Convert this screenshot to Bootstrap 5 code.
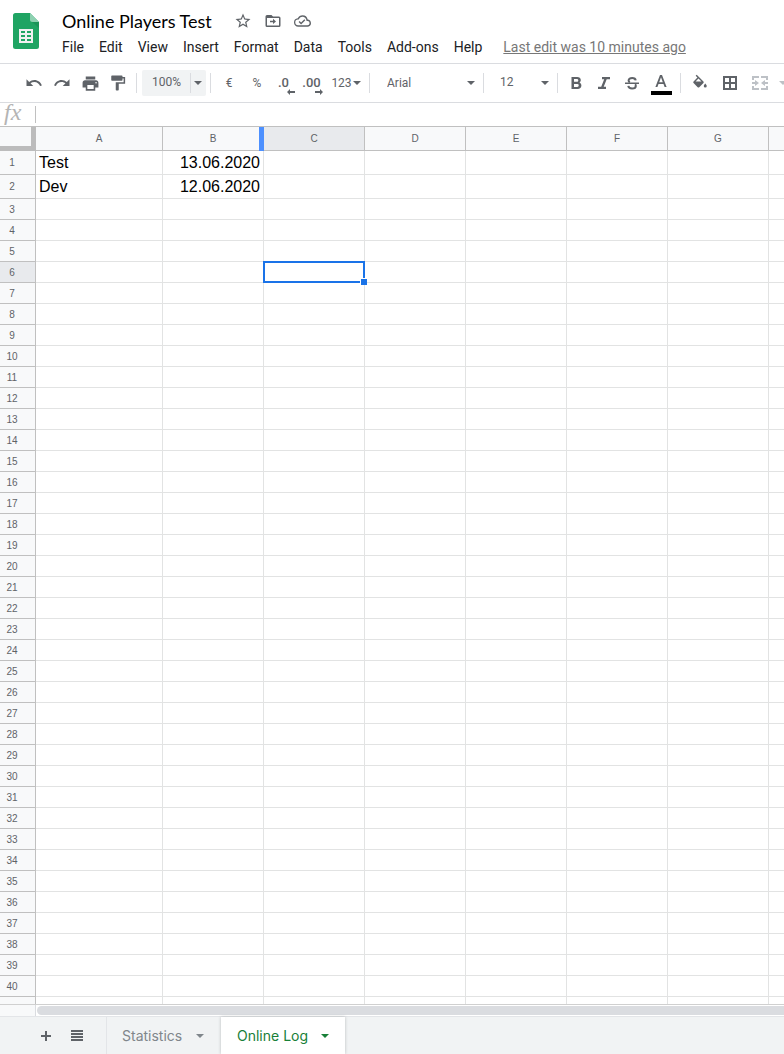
<!DOCTYPE html>
<html lang="en">
<head>
<meta charset="utf-8">
<meta name="viewport" content="width=device-width, initial-scale=1">
<title>Online Players Test</title>
<link href="https://cdn.jsdelivr.net/npm/bootstrap@5.3.0/dist/css/bootstrap.min.css" rel="stylesheet">
<style>
  body { font-family: Roboto, "Liberation Sans", sans-serif; color: #202124; font-size: 14px; line-height: 20px; }
  button { border: 0; background: none; padding: 0; color: inherit; }
  svg { display: block; fill: currentColor; flex: none; }
  .ink { color: #5f6368; }

  .doc-head { border-bottom: 1px solid #dadce0; height: 64px; }
  .doc-logo { margin: 13px 16px 0 13px; }
  .doc-title { font-family: Lato, sans-serif; font-size: 18px; line-height: 24px; padding-left: 7px; color: #000; }
  .doc-text { padding-top: 9px; }
  .doc-actions { gap: 12px; margin-left: 22px; }
  .doc-menu { gap: 1px; padding-top: 4px; }
  .doc-menu button { padding: 0 7px; white-space: nowrap; }
  .last-edit { color: #777; margin-left: 13px; white-space: nowrap; }

  .tool-row { height: 39px; border-bottom: 1px solid #dadce0; padding-left: 20px; font-size: 12px; }
  .tool { width: 28px; height: 26px; display: flex; align-items: center; justify-content: center; flex: none; }
  .tool-wide { width: 30px; }
  .tool-num { width: 38px; gap: 1px; }
  .rule { width: 1px; height: 20px; background: #dadce0; margin: 0 4px; flex: none; }
  .pick { appearance: none; border: 0; border-radius: 2px; height: 26px; color: #5f6368; font-size: 12px; line-height: 20px; flex: none;
    background: url("data:image/svg+xml,%3Csvg xmlns='http://www.w3.org/2000/svg' viewBox='0 0 8 4'%3E%3Cpath fill='%235f6368' d='M0 0h8L4 4z'/%3E%3C/svg%3E") no-repeat right 4px center / 8px 4px; }
  .pick-zoom { width: 64px; padding: 0 0 2px 10px; background-color: #f1f3f4; margin-left: 1px; }
  .zoom-box::after { content: ""; position: absolute; right: 15px; top: 3px; height: 20px; width: 1px; background: #dadce0; }
  .pick-font { width: 105px; padding: 0 0 0 13px; }
  .pick-size { width: 65px; padding: 0 0 2px 12px; }
  .decimals { font-size: 13px; line-height: 16px; font-weight: 500; padding-right: 3px; }
  .decimals svg { position: absolute; right: 4px; bottom: 1px; }
  .faded { color: #bdc1c6; }

  .fx-row { height: 23px; }
  .fx-mark { width: 35px; font: italic 24px/16px "Liberation Serif", serif; color: #b4b4b4; padding: 0 0 5px 4px; }
  .fx-row input { border: 0; outline: 0; border-left: 1px solid #c0c0c0; height: 17px; }

  .sheet-area { border-top: 1px solid #c0c0c0; border-bottom: 1px solid #d0d0d0; }
  .cells { table-layout: fixed; width: 100%; border-collapse: separate; border-spacing: 0; color: #000; }
  .cells th, .cells td { padding: 0; position: relative; white-space: nowrap; }
  .cells th { background: #f8f9fa; border: solid #c0c0c0; border-width: 0 1px 1px 0; font: 400 10px/12px "Liberation Sans", sans-serif; text-align: center; vertical-align: middle; color: #5f6368; }
  .cells tbody th { padding: 1px 11px 0 0; }
  .cells td { border: solid #e2e3e3; border-width: 0 1px 1px 0; font: 16px/19px "Liberation Sans", sans-serif; padding: 0 3px; }
  .cells tr > :last-child { border-right: 0; }
  .cells thead tr { height: 24px; }
  .cells tbody tr { height: 21px; }
  .cells tbody tr.tall { height: 24px; }
  .c-num { width: 36px; } .c-a { width: 127px; } .c-std { width: 101px; }
  .cells th.picked { background: #e8eaed; }
  .cells th.corner { border-right: 5px solid #bcbcbc; border-bottom: 5px solid #bcbcbc; }
  .freeze-bar { position: absolute; right: -1px; top: 0; bottom: -1px; width: 5px; background: #4d90fe; z-index: 1; }
  .cursor { position: absolute; inset: -1px; border: 2px solid #1a73e8; z-index: 2; }
  .cursor::after { content: ""; position: absolute; right: -4px; bottom: -4px; width: 7px; height: 7px; background: #1a73e8; border: solid #fff; border-width: 1px 0 0 1px; }

  .scroll-row { height: 11px; }
  .scroll-stub { width: 36px; background: #f8f9fa; border-right: 1px solid #dadce0; }
  .scroll-thumb { background: #dadce0; height: 9px; margin: 1px 0 1px 1px; border-radius: 5px 0 0 5px; }
  .tab-row { height: 38px; background: #f1f3f4; border-top: 1px solid #e3e5e8; padding-left: 32px; font-family: Inter, sans-serif; font-weight: 500; }
  .tab-tools { gap: 3px; margin-right: 15px; }
  .sheet-tab { padding: 0 17px 0 15px; color: #80868b; border-left: 1px solid #e3e5e8; width: 115px; white-space: nowrap; }
  .sheet-tab.current { background: #fff; color: #188038; width: 124px; border: 0; padding: 0 16px; box-shadow: 0 0 3px rgba(60,64,67,.3); }
</style>
</head>
<body>
<div class="vh-100 d-flex flex-column overflow-hidden">
  <header class="doc-head d-flex flex-shrink-0">
    <svg class="doc-logo" width="26" height="36" viewBox="0 0 26 36">
      <path fill="#1fa463" d="M2.500 0H17l9 9v24.500a2.500 2.500 0 0 1-2.500 2.500h-21A2.500 2.500 0 0 1 0 33.500v-31A2.500 2.500 0 0 1 2.500 0z"/>
      <path fill="#188a51" d="M19 9h7v6z" opacity=".6"/>
      <path fill="#8ed1b1" d="M17 0l9 9h-6.500A2.500 2.500 0 0 1 17 6.500z"/>
      <path fill="#f1f1f1" fill-rule="evenodd" d="M6 16h14v14H6zM8 18v2h4v-2zm6 0v2h4v-2zM8 22v2h4v-2zm6 0v2h4v-2zM8 26v2h4v-2zm6 0v2h4v-2z"/>
    </svg>
    <div class="doc-text">
      <div class="d-flex align-items-center ink">
        <h1 class="doc-title m-0 fw-normal">Online Players Test</h1>
        <div class="d-flex align-items-center doc-actions">
          <button aria-label="Star"><svg width="18" height="18" viewBox="0 0 24 24"><path d="M22 9.240l-7.190-.62L12 2 9.190 8.630 2 9.240l5.460 4.730L5.820 21 12 17.270 18.180 21l-1.630-7.030L22 9.240zM12 15.400l-3.760 2.270 1-4.280-3.320-2.880 4.380-.38L12 6.100l1.710 4.040 4.380.38-3.320 2.880 1 4.280L12 15.400z"/></svg></button>
          <button aria-label="Move"><svg width="18" height="18" viewBox="0 0 24 24"><path d="M20 6h-8l-2-2H4a2 2 0 0 0-2 2v12a2 2 0 0 0 2 2h16a2 2 0 0 0 2-2V8a2 2 0 0 0-2-2zm0 12H4V8h16zM12 16l4-3.500L12 9v2.500H8v2h4z"/></svg></button>
          <button aria-label="Saved to Drive"><svg width="17" height="18" viewBox="0 3 24 18"><path d="M19.350 10.040A7.490 7.490 0 0 0 12 4C9.110 4 6.600 5.640 5.350 8.040A5.994 5.994 0 0 0 0 14c0 3.310 2.690 6 6 6h13c2.760 0 5-2.240 5-5 0-2.640-2.050-4.780-4.650-4.960zM19 18H6a4 4 0 0 1-.4-8l1.100-.1.500-.95A5.500 5.500 0 0 1 17.400 10.400l.3 1.500 1.530.11A3 3 0 0 1 19 18zm-9-3.800l-2.100-2.100-1.400 1.400L10 17l6-6-1.400-1.400z"/></svg></button>
        </div>
      </div>
      <nav class="doc-menu d-flex" aria-label="Menu">
        <button>File</button><button>Edit</button><button>View</button><button>Insert</button><button>Format</button><button>Data</button><button>Tools</button><button>Add-ons</button><button>Help</button>
        <a href="#" class="last-edit">Last edit was 10 minutes ago</a>
      </nav>
    </div>
  </header>

  <div class="tool-row d-flex align-items-center flex-shrink-0 ink" role="toolbar">
    <button class="tool" aria-label="Undo"><svg width="18" height="18" viewBox="0 0 24 24"><path d="M12.500 8c-2.650 0-5.050.99-6.900 2.600L2 7v9h9l-3.620-3.620A7.970 7.970 0 0 1 12.500 10.500c3.540 0 6.550 2.310 7.600 5.500l2.370-.78C21.080 11.030 17.150 8 12.500 8z"/></svg></button>
    <button class="tool" aria-label="Redo"><svg width="18" height="18" viewBox="0 0 24 24"><path d="M18.400 10.600A10.480 10.480 0 0 0 11.500 8c-4.650 0-8.580 3.030-9.960 7.220L3.900 16a8.002 8.002 0 0 1 7.600-5.500c1.950 0 3.730.72 5.120 1.880L13 16h9V7z"/></svg></button>
    <button class="tool" aria-label="Print"><svg width="19" height="19" viewBox="0 0 24 24"><path d="M19 8H5c-1.660 0-3 1.340-3 3v6h4v4h12v-4h4v-6c0-1.660-1.340-3-3-3zm-3 11H8v-5h8zm3-7a1 1 0 1 1 0-2 1 1 0 0 1 0 2zM18 3H6v4h12z"/></svg></button>
    <button class="tool" aria-label="Paint format"><svg width="18" height="18" viewBox="0 0 24 24"><path d="M18 4V3a1 1 0 0 0-1-1H4a1 1 0 0 0-1 1v5a1 1 0 0 0 1 1h13a1 1 0 0 0 1-1V6h1.500v5H9v10a1 1 0 0 0 1 1h2a1 1 0 0 0 1-1v-8h8.500V4z"/></svg></button>
    <span class="rule"></span>
    <span class="zoom-box position-relative d-flex flex-shrink-0"><select class="pick pick-zoom" aria-label="Zoom"><option>100%</option></select></span>
    <span class="rule"></span>
    <button class="tool">€</button>
    <button class="tool">%</button>
    <button class="tool decimals position-relative">.0<svg width="8" height="6" viewBox="0 0 8 6"><path d="M3 0v2h5v2H3v2L0 3z"/></svg></button>
    <button class="tool decimals position-relative">.00<svg width="8" height="6" viewBox="0 0 8 6"><path d="M5 0v2H0v2h5v2l3-3z"/></svg></button>
    <button class="tool tool-num">123<svg width="8" height="4" viewBox="0 0 8 4"><path d="M0 0h8L4 4z"/></svg></button>
    <span class="rule"></span>
    <select class="pick pick-font" aria-label="Font"><option>Arial</option></select>
    <span class="rule"></span>
    <select class="pick pick-size" aria-label="Font size"><option>12</option></select>
    <span class="rule"></span>
    <button class="tool" aria-label="Bold"><svg width="18" height="18" viewBox="0 0 18 18"><path d="M12.500 8.600c.8-.6 1.300-1.500 1.300-2.500C13.800 4 12.300 3 10.200 3H4.500v12h6.300c2 0 3.600-1.400 3.600-3.400 0-1.400-.8-2.500-1.900-3zM7 5h2.900c.8 0 1.400.6 1.400 1.400S10.700 7.700 9.900 7.700H7zm3.300 7.900H7V10h3.300a1.450 1.450 0 0 1 0 2.900z"/></svg></button>
    <button class="tool" aria-label="Italic"><svg width="18" height="18" viewBox="0 0 18 18"><path d="M7 3v2.200h2.200l-3 7.600H3V15h8v-2.200H8.700l3-7.600H15V3z"/></svg></button>
    <button class="tool" aria-label="Strikethrough"><svg width="18" height="18" viewBox="0 0 18 18"><path d="M2 8.500h14V10H2z"/><path fill="none" stroke="currentColor" stroke-width="2" d="M12.700 6.400C12.500 4.800 11.100 4 9.200 4 7.200 4 5.600 4.800 5.600 6.400c0 .8.400 1.400 1.200 1.900M5.300 11.800c.2 1.700 1.700 2.600 3.800 2.600s3.700-.8 3.700-2.500c0-.7-.2-1.300-.7-1.700"/></svg></button>
    <button class="tool tool-wide" aria-label="Text color"><svg width="22" height="24" viewBox="0 0 22 24"><path fill-rule="evenodd" d="M10 4h2l4.600 12h-2l-1.100-3H8.500l-1.100 3h-2zm-.8 7.200h3.600L11 6.300z"/><path fill="#000" d="M1 20h21v4H1z"/></svg></button>
    <span class="rule"></span>
    <button class="tool tool-wide" aria-label="Fill color"><svg width="18" height="20" viewBox="0 0 24 26"><path fill-rule="evenodd" d="M16.600 10.900L7.600 2 6.200 3.400l2.400 2.400-5.200 5.100a1.490 1.490 0 0 0 0 2.100l5.500 5.500c.6.600 1.500.6 2.100 0l5.600-5.500c.5-.5.500-1.500 0-2.100zM6 11l4-3.900L14 11zM19 13.500s-2 2.200-2 3.500a2 2 0 0 0 4 0c0-1.300-2-3.500-2-3.500z"/></svg></button>
    <button class="tool tool-wide" aria-label="Borders"><svg width="14" height="14" viewBox="0 0 14 14"><path fill-rule="evenodd" d="M0 0h14v14H0zM2 2v4h4V2zm6 0v4h4V2zM2 8v4h4V8zm6 0v4h4V8z"/></svg></button>
    <button class="tool tool-wide faded" aria-label="Merge cells" disabled><svg width="16" height="14" viewBox="0 0 16 14"><path d="M0 0h7v2H2v2H0zM9 0h7v4h-2V2H9zM0 10h2v2h5v2H0zM14 10h2v4H9v-2h5zM0 6h3V4l4 3-4 3V8H0zM16 6h-3V4L9 7l4 3V8h3z"/></svg></button>
    <svg class="faded ms-1" width="8" height="4" viewBox="0 0 8 4"><path d="M0 0h8L4 4z"/></svg>
  </div>

  <div class="fx-row d-flex align-items-center flex-shrink-0">
    <label for="formula" class="fx-mark flex-shrink-0">fx</label>
    <input id="formula" class="flex-grow-1" type="text">
  </div>

  <main class="sheet-area flex-grow-1 overflow-hidden">
    <table class="cells">
      <colgroup><col class="c-num"><col class="c-a"><col class="c-std" span="6"><col></colgroup>
      <thead><tr>
        <th class="corner"></th><th>A</th><th>B<span class="freeze-bar"></span></th><th class="picked">C</th><th>D</th><th>E</th><th>F</th><th>G</th><th></th>
      </tr></thead>
      <tbody id="rows"></tbody>
    </table>
  </main>

  <div class="scroll-row d-flex flex-shrink-0">
    <div class="scroll-stub"></div><div class="scroll-thumb flex-grow-1"></div>
  </div>
  <footer class="tab-row d-flex flex-shrink-0">
    <div class="tab-tools d-flex align-items-center">
      <button class="tool ink" aria-label="Add sheet"><svg width="10" height="10" viewBox="0 0 10 10"><path d="M4 0h2v4h4v2H6v4H4V6H0V4h4z"/></svg></button>
      <button class="tool ink" aria-label="All sheets"><svg width="12" height="11" viewBox="0 0 12 11"><path d="M0 0h12v2H0zM0 3h12v2H0zM0 6h12v2H0zM0 9h12v2H0z"/></svg></button>
    </div>
    <button class="sheet-tab d-flex align-items-center justify-content-between">Statistics <svg width="8" height="4" viewBox="0 0 8 4"><path d="M0 0h8L4 4z"/></svg></button>
    <button class="sheet-tab current d-flex align-items-center justify-content-between">Online Log <svg width="8" height="4" viewBox="0 0 8 4"><path d="M0 0h8L4 4z"/></svg></button>
  </footer>
</div>
<script src="https://cdn.jsdelivr.net/npm/bootstrap@5.3.0/dist/js/bootstrap.bundle.min.js"></script>
<script>
  const data = { 1: ['Test', '13.06.2020'], 2: ['Dev', '12.06.2020'] };
  const rows = document.getElementById('rows');
  for (let r = 1; r <= 41; r++) {
    const tr = rows.insertRow();
    const values = data[r] || ['', ''];
    if (data[r]) tr.className = 'tall';
    tr.innerHTML = `<th${r === 6 ? ' class="picked"' : ''}>${r <= 40 ? r : ''}</th>` +
      `<td>${values[0]}</td><td class="text-end">${values[1]}</td>` +
      `<td>${r === 6 ? '<div class="cursor"></div>' : ''}</td>` + '<td></td>'.repeat(5);
  }
</script>
</body>
</html>
